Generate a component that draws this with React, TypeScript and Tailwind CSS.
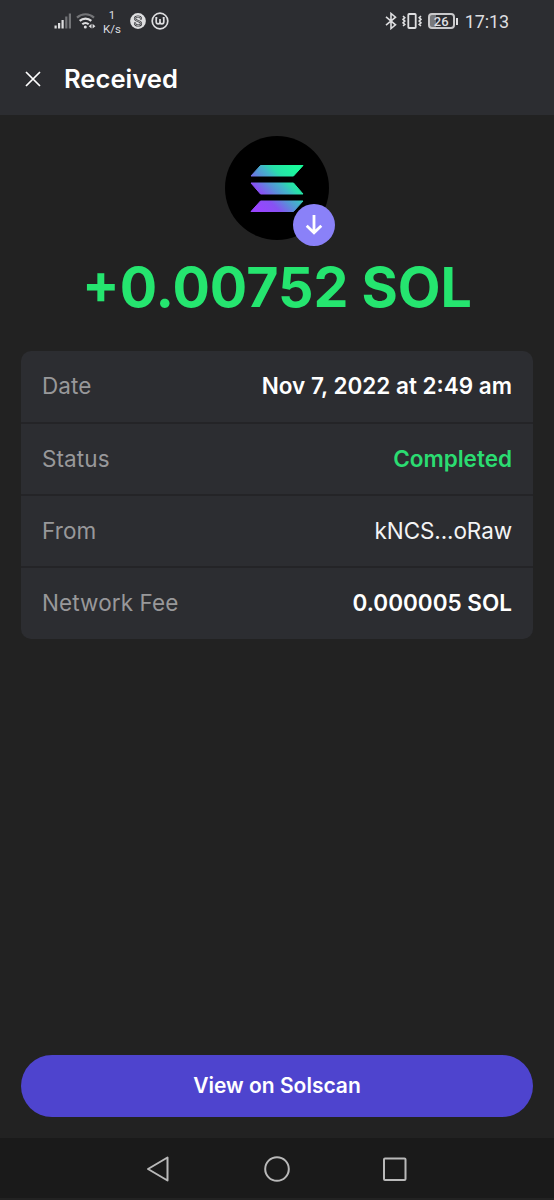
import clsx from "clsx";

type DetailRow = {
  label: string;
  value: string;
  valueClass: string;
};

const rows: DetailRow[] = [
  {
    label: "Date",
    value: "Nov 7, 2022 at 2:49 am",
    valueClass: "font-semibold text-white",
  },
  {
    label: "Status",
    value: "Completed",
    valueClass: "font-semibold text-[#2bdc71]",
  },
  {
    label: "From",
    value: "kNCS...oRaw",
    valueClass: "tracking-[-0.1px] text-[#f4f4f5]",
  },
  {
    label: "Network Fee",
    value: "0.000005 SOL",
    valueClass: "font-semibold text-white",
  },
];

function StatusBar() {
  return (
    <div className="flex h-[42px] items-center pr-[45px] pl-[54px] text-[#dedee0]">
      {/* signal */}
      <svg width="18" height="16" viewBox="0 0 18 16" fill="currentColor">
        <rect x="0.5" y="12.5" width="2.2" height="3" />
        <rect x="4" y="10" width="2.2" height="5.5" />
        <rect x="7.5" y="7" width="2.2" height="8.5" />
        <rect x="11.2" y="3.5" width="2.2" height="12" opacity="0.4" />
        <rect x="14.8" y="0.5" width="2.2" height="15" opacity="0.4" />
      </svg>
      {/* wifi */}
      <svg
        width="20"
        height="16"
        viewBox="0 0 20 16"
        className="ml-[4px]"
        fill="none"
        stroke="currentColor"
        strokeWidth="2.2"
      >
        <path d="M1 4.6a12.4 12.4 0 0 1 17 0" opacity="0.4" />
        <path d="M3.7 7.9a8.6 8.6 0 0 1 11.6 0" />
        <path d="M6.3 11.2a4.8 4.8 0 0 1 6.4 0" />
        <circle cx="9.3" cy="14" r="1.5" fill="currentColor" stroke="none" />
        <path
          d="M15.5 10.8v4.8l-2.8-2.4zM16.6 10.8v4.8l2.8-2.4z"
          fill="currentColor"
          stroke="none"
        />
      </svg>
      <div className="ml-[6px] flex w-[20px] flex-col items-center pt-px font-['Roboto',sans-serif] text-[11.5px] leading-[14px]">
        <span>1</span>
        <span>K/s</span>
      </div>
      <svg width="16" height="16" viewBox="0 0 16 16" className="ml-[8px]">
        <circle cx="8" cy="8" r="7.9" fill="currentColor" />
        <g fill="none" strokeLinecap="round">
          <path
            d="M11 5.6C10.8 4 9.6 3.5 8 3.5c-1.8 0-3 .7-3 2.1 0 2.8 6 2 6 4.8 0 1.4-1.2 2.1-3 2.1-1.7 0-2.9-.6-3-2.1"
            stroke="#35363a"
            strokeWidth="2.2"
          />
          <path
            d="M11 5.6C10.8 4 9.6 3.5 8 3.5c-1.8 0-3 .7-3 2.1 0 2.8 6 2 6 4.8 0 1.4-1.2 2.1-3 2.1-1.7 0-2.9-.6-3-2.1"
            stroke="currentColor"
            strokeWidth="0.7"
          />
        </g>
      </svg>
      <svg
        width="18"
        height="18"
        viewBox="0 0 18 18"
        className="ml-[5px]"
        fill="none"
        stroke="currentColor"
        strokeWidth="1.7"
      >
        <circle cx="9" cy="9" r="7.8" />
        <path d="M6.3 5.9H5.2v3.8c0 1.5.7 2.2 1.9 2.2S9 11.2 9 9.7V6.9v2.8c0 1.5.8 2.2 1.9 2.2 1.2 0 1.9-.7 1.9-2.2V5.900h-1.1" />
      </svg>

      <div className="ml-auto flex items-center">
        {/* bluetooth */}
        <svg
          width="12"
          height="18"
          viewBox="0 0 12 18"
          fill="none"
          stroke="currentColor"
          strokeWidth="1.6"
        >
          <path d="M1 4.8l9.500 8L6 16.500V1.500l4.500 3.700L1 13.200" />
        </svg>
        {/* vibrate */}
        <svg
          width="20"
          height="16"
          viewBox="0 0 20 16"
          className="ml-[5px]"
          fill="none"
          stroke="currentColor"
          strokeWidth="1.8"
        >
          <rect x="6.3" y="1" width="7.4" height="14" rx="0.8" />
          <path
            d="M1 3l1.8 1.7L1 6.4l1.8 1.7L1 9.8l1.8 1.7L1 13M19 3l-1.8 1.7L19 6.4l-1.8 1.7L19 9.8l-1.8 1.7L19 13"
            strokeWidth="1.6"
          />
        </svg>
        {/* battery */}
        <div className="ml-[6px] flex items-center">
          <div className="flex h-[16px] w-[27px] items-center justify-center rounded-[4px] border-2 border-[#c9c9cb] bg-[linear-gradient(90deg,#77787b_28%,transparent_28%)] font-['Roboto',sans-serif] text-[13px] leading-none font-medium">
            26
          </div>
          <div className="ml-px h-[7px] w-[2px] bg-[#dedee0]" />
        </div>
        <span className="ml-[7px] pt-px font-['Roboto',sans-serif] text-[18px] leading-none tracking-[-0.1px]">
          17:13
        </span>
      </div>
    </div>
  );
}

function SolanaLogo() {
  return (
    <svg width="54" height="49" viewBox="0 0 54 49">
      <defs>
        <linearGradient
          id="sol"
          x1="6"
          y1="48"
          x2="50"
          y2="4"
          gradientUnits="userSpaceOnUse"
        >
          <stop offset="0.06" stopColor="#9945ff" />
          <stop offset="0.28" stopColor="#8752f3" />
          <stop offset="0.48" stopColor="#5497d5" />
          <stop offset="0.58" stopColor="#43b4ca" />
          <stop offset="0.7" stopColor="#28e0a9" />
          <stop offset="0.95" stopColor="#19fb9b" />
        </linearGradient>
      </defs>
      <g fill="url(#sol)" stroke="url(#sol)" strokeLinejoin="round">
        <path d="M10.5 1.5H53L43.5 12H1z" />
        <path d="M1 19H43.5L53 30H10.5z" />
        <path d="M10.5 37H53L43.5 47.5H1z" />
      </g>
    </svg>
  );
}

function TokenIcon() {
  return (
    <div className="relative flex size-[104px] items-center justify-center rounded-full bg-black">
      <SolanaLogo />
      <div className="absolute top-[68px] left-[68px] flex size-[42px] items-center justify-center rounded-full bg-[#8a81f8]">
        <svg
          width="18"
          height="22"
          viewBox="0 0 18 22"
          fill="none"
          stroke="white"
          strokeWidth="2.8"
        >
          <path d="M9 1v17.5M1.7 11.8L9 18.8l7.3-7" />
        </svg>
      </div>
    </div>
  );
}

export default function App() {
  return (
    <main className="flex h-[1200px] w-[554px] flex-col overflow-hidden bg-[#222222] font-['Inter',sans-serif]">
      <header className="h-[115px] bg-[#2c2d31]">
        <StatusBar />
        <div className="flex h-[73px] items-center pl-[25px]">
          <svg
            width="16"
            height="16"
            viewBox="0 0 16 16"
            stroke="white"
            strokeWidth="1.7"
          >
            <path d="M1 1l14 14M15 1L1 15" />
          </svg>
          <h1 className="ml-[23px] pt-[2px] text-[25.6px] font-semibold text-white">
            Received
          </h1>
        </div>
      </header>

      <section className="flex flex-1 flex-col items-center px-[21px] pt-[21px]">
        <TokenIcon />
        <div className="mt-[12px] h-[70px] text-[55.5px] leading-[70px] font-bold whitespace-nowrap text-[#25e56f]">
          +0.00752 SOL
        </div>

        <div className="mt-[29px] w-full overflow-hidden rounded-[10px] bg-[#2c2d31]">
          {rows.map((row, i) => (
            <div
              key={row.label}
              className={clsx(
                "flex items-center justify-between px-[21px] text-[22.5px]",
                i === 0 ? "h-[71px] pb-[2px]" : "border-t-2 border-[#242427] pb-px",
                i === rows.length - 1 ? "h-[73px]" : i > 0 && "h-[72px]"
              )}
            >
              <span className="tracking-[0.1px] text-[#98989a]">
                {row.label}
              </span>
              <span className={row.valueClass}>{row.value}</span>
            </div>
          ))}
        </div>

        <button className="mt-auto mb-[21px] h-[62px] w-full rounded-full bg-[#4e44ce] text-[21px] font-semibold text-white">
          View on Solscan
        </button>
      </section>

      <nav className="flex h-[62px] items-center justify-center gap-[92px] border-b-2 border-[#222222] bg-[#1a1a1a] pt-[2px]">
        <svg
          width="26"
          height="28"
          viewBox="0 0 26 28"
          fill="none"
          stroke="#b9b9b9"
          strokeWidth="2"
          strokeLinejoin="round"
        >
          <path d="M21.5 2.5v23L2 14z" />
        </svg>
        <svg
          width="26"
          height="28"
          viewBox="0 0 26 28"
          fill="none"
          stroke="#b9b9b9"
          strokeWidth="2"
        >
          <circle cx="13" cy="14" r="11.8" />
        </svg>
        <svg
          width="26"
          height="28"
          viewBox="0 0 26 28"
          fill="none"
          stroke="#b9b9b9"
          strokeWidth="2"
        >
          <rect x="2" y="3.5" width="21.5" height="21.5" rx="1" />
        </svg>
      </nav>
    </main>
  );
}
